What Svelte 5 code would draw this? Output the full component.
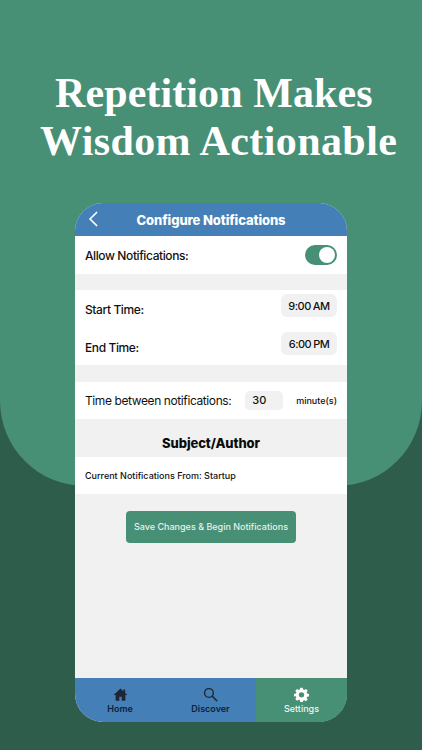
<script>
  const tabs = [
    { label: "Home", icon: "home" },
    { label: "Discover", icon: "search" },
    { label: "Settings", icon: "gear", active: true },
  ];
</script>

<div class="page">
  <div class="backdrop"></div>

  <h1>
    <span class="line-1">Repetition Makes</span>
    <span class="line-2">Wisdom Actionable</span>
  </h1>

  <div class="phone">
    <header>
      <svg class="back" viewBox="0 0 10 16" width="10" height="16">
        <path d="M7.6 1.5 1 8l6.6 6.5" fill="none" stroke="#fff" stroke-width="1.7" stroke-linecap="round" stroke-linejoin="round" />
      </svg>
      <span>Configure Notifications</span>
    </header>

    <div class="content">
      <section class="row allow">
        <span>Allow Notifications:</span>
        <div class="toggle"><div class="knob"></div></div>
      </section>

      <section class="times">
        <div class="row time">
          <span>Start Time:</span>
          <div class="pill">9:00<i></i>AM</div>
        </div>
        <div class="row time">
          <span>End Time:</span>
          <div class="pill">6:00<i></i>PM</div>
        </div>
      </section>

      <section class="row between">
        <span class="between-label">Time between notifications:</span>
        <div class="minutes">30</div>
        <span class="unit">minute(s)</span>
      </section>

      <h2>Subject/Author</h2>

      <section class="row current">Current Notifications From: Startup</section>

      <button>Save Changes &amp; Begin Notifications</button>
    </div>

    <nav>
      {#each tabs as tab}
        <div class="tab" class:active={tab.active}>
          {#if tab.icon === "home"}
            <svg viewBox="0 0 24 24" width="15" height="15">
              <path d="M12 2.5 1 12.6h3.2V22h5.9v-6.4h3.8V22h5.9v-9.4H23L19.5 9.4V4h-3v2.6z" fill="#1d2733" />
            </svg>
          {:else if tab.icon === "search"}
            <svg viewBox="0 0 24 24" width="15" height="15">
              <circle cx="9.5" cy="9.5" r="7" fill="none" stroke="#1d2733" stroke-width="2.2" />
              <path d="m14.8 14.8 7.2 7.2" stroke="#1d2733" stroke-width="2.6" stroke-linecap="round" />
            </svg>
          {:else}
            <svg viewBox="0 0 24 24" width="15" height="15">
              <path
                fill="#fff"
                fill-rule="evenodd"
                d="M10 1h4l.7 3.1 1.7.7 2.7-1.7 2.8 2.8-1.7 2.7.7 1.7L24 11v4l-3.1.7-.7 1.7 1.7 2.7-2.8 2.8-2.7-1.7-1.7.7L14 24h-4l-.7-3.1-1.7-.7-2.7 1.7-2.8-2.8 1.7-2.7-.7-1.7L0 15v-4l3.1-.7.7-1.7L2.1 5.9l2.8-2.8 2.7 1.7 1.7-.7zM12 8.2a4.3 4.3 0 1 0 0 8.6 4.3 4.3 0 0 0 0-8.6z"
              />
            </svg>
          {/if}
          <span>{tab.label}</span>
        </div>
      {/each}
    </nav>
  </div>
</div>

<style>
  :global(body) {
    margin: 0;
    background: #2f5d4b;
  }

  .page {
    position: relative;
    width: 422px;
    height: 750px;
    overflow: hidden;
    background: #2f5d4b;
    display: flex;
    flex-direction: column;
    align-items: center;
    font-family: Inter, "Liberation Sans", sans-serif;
  }

  .backdrop {
    position: absolute;
    left: 0;
    top: 0;
    right: 0;
    height: 486px;
    background: #478f75;
    border-radius: 0 0 85px 85px;
  }

  h1 {
    position: relative;
    margin: 0;
    height: 203px;
    width: 100%;
    box-sizing: border-box;
    padding-top: 69px;
    font-family: "Liberation Serif", serif;
    font-weight: 700;
    font-size: 42px;
    line-height: 48px;
    letter-spacing: 0.4px;
    color: #fff;
  }

  h1 span {
    display: block;
    white-space: nowrap;
  }

  .line-1 {
    padding-left: 55px;
    letter-spacing: 0.1px;
  }

  .line-2 {
    padding-left: 40px;
  }

  .phone {
    position: relative;
    width: 272px;
    height: 519px;
    border-radius: 28px;
    overflow: hidden;
    background: #f1f1f1;
    display: flex;
    flex-direction: column;
  }

  header {
    height: 33px;
    flex: none;
    background: #457fb7;
    color: #fff;
    display: flex;
    align-items: center;
    justify-content: center;
    font-size: 13px;
    font-weight: 800;
    letter-spacing: -0.1px;
    position: relative;
  }

  .back {
    position: absolute;
    left: 14px;
    top: 8px;
  }

  .content {
    flex: 1;
    display: flex;
    flex-direction: column;
    align-items: stretch;
    color: #111;
  }

  .row {
    display: flex;
    align-items: center;
    justify-content: space-between;
    padding: 0 10px;
    background: #fff;
    font-size: 12px;
    font-weight: 500;
    letter-spacing: -0.4px;
  }

  .allow {
    height: 38px;
  }

  .toggle {
    width: 32px;
    height: 20px;
    box-sizing: border-box;
    padding: 2px;
    border-radius: 10px;
    background: #478f75;
    display: flex;
    justify-content: flex-end;
  }

  .knob {
    width: 16px;
    height: 16px;
    border-radius: 50%;
    background: #fff;
  }

  .times {
    margin-top: 16px;
    height: 75px;
    background: #fff;
    box-sizing: border-box;
    padding-top: 4px;
    display: flex;
    flex-direction: column;
    gap: 15px;
  }

  .time {
    height: 23px;
  }

  .time > span {
    margin-top: 7px;
  }

  .pill {
    width: 56px;
    height: 23px;
    border-radius: 6px;
    background: #f1f1f1;
    display: flex;
    align-items: center;
    justify-content: center;
    font-size: 11px;
    font-weight: 500;
    letter-spacing: -0.5px;
  }

  .pill i {
    width: 2px;
  }

  .between {
    margin-top: 17px;
    height: 37px;
    justify-content: flex-start;
  }

  .between-label {
    font-weight: 400;
    white-space: nowrap;
  }

  .minutes {
    margin-left: 14px;
    width: 38px;
    height: 19px;
    box-sizing: border-box;
    padding-left: 7px;
    border-radius: 5px;
    background: #f1f1f1;
    font-size: 11px;
    line-height: 19px;
    letter-spacing: 0;
  }

  .unit {
    margin-left: 13px;
    font-size: 9px;
    font-weight: 500;
    letter-spacing: 0;
  }

  h2 {
    margin: 0;
    height: 38px;
    box-sizing: border-box;
    padding-top: 10px;
    display: flex;
    align-items: center;
    justify-content: center;
    font-size: 13px;
    font-weight: 800;
    letter-spacing: -0.1px;
    color: #0c0c0c;
  }

  .current {
    height: 37px;
    font-size: 9px;
    font-weight: 500;
    letter-spacing: 0;
    justify-content: flex-start;
  }

  button {
    align-self: center;
    margin-top: 17px;
    width: 170px;
    height: 32px;
    border: 0;
    padding: 0 0 1px;
    border-radius: 4px;
    background: #478f75;
    color: #e8f1ed;
    font-family: inherit;
    font-size: 9px;
    font-weight: 500;
  }

  nav {
    height: 44px;
    flex: none;
    display: grid;
    grid-template-columns: 90px 91px 91px;
    background: #457fb7;
  }

  .tab {
    display: flex;
    flex-direction: column;
    align-items: center;
    justify-content: center;
    gap: 1px;
    font-size: 9px;
    font-weight: 600;
    color: #0e2138;
  }

  .tab.active {
    background: #478f75;
    color: #f1f6f4;
    font-weight: 500;
  }
</style>
